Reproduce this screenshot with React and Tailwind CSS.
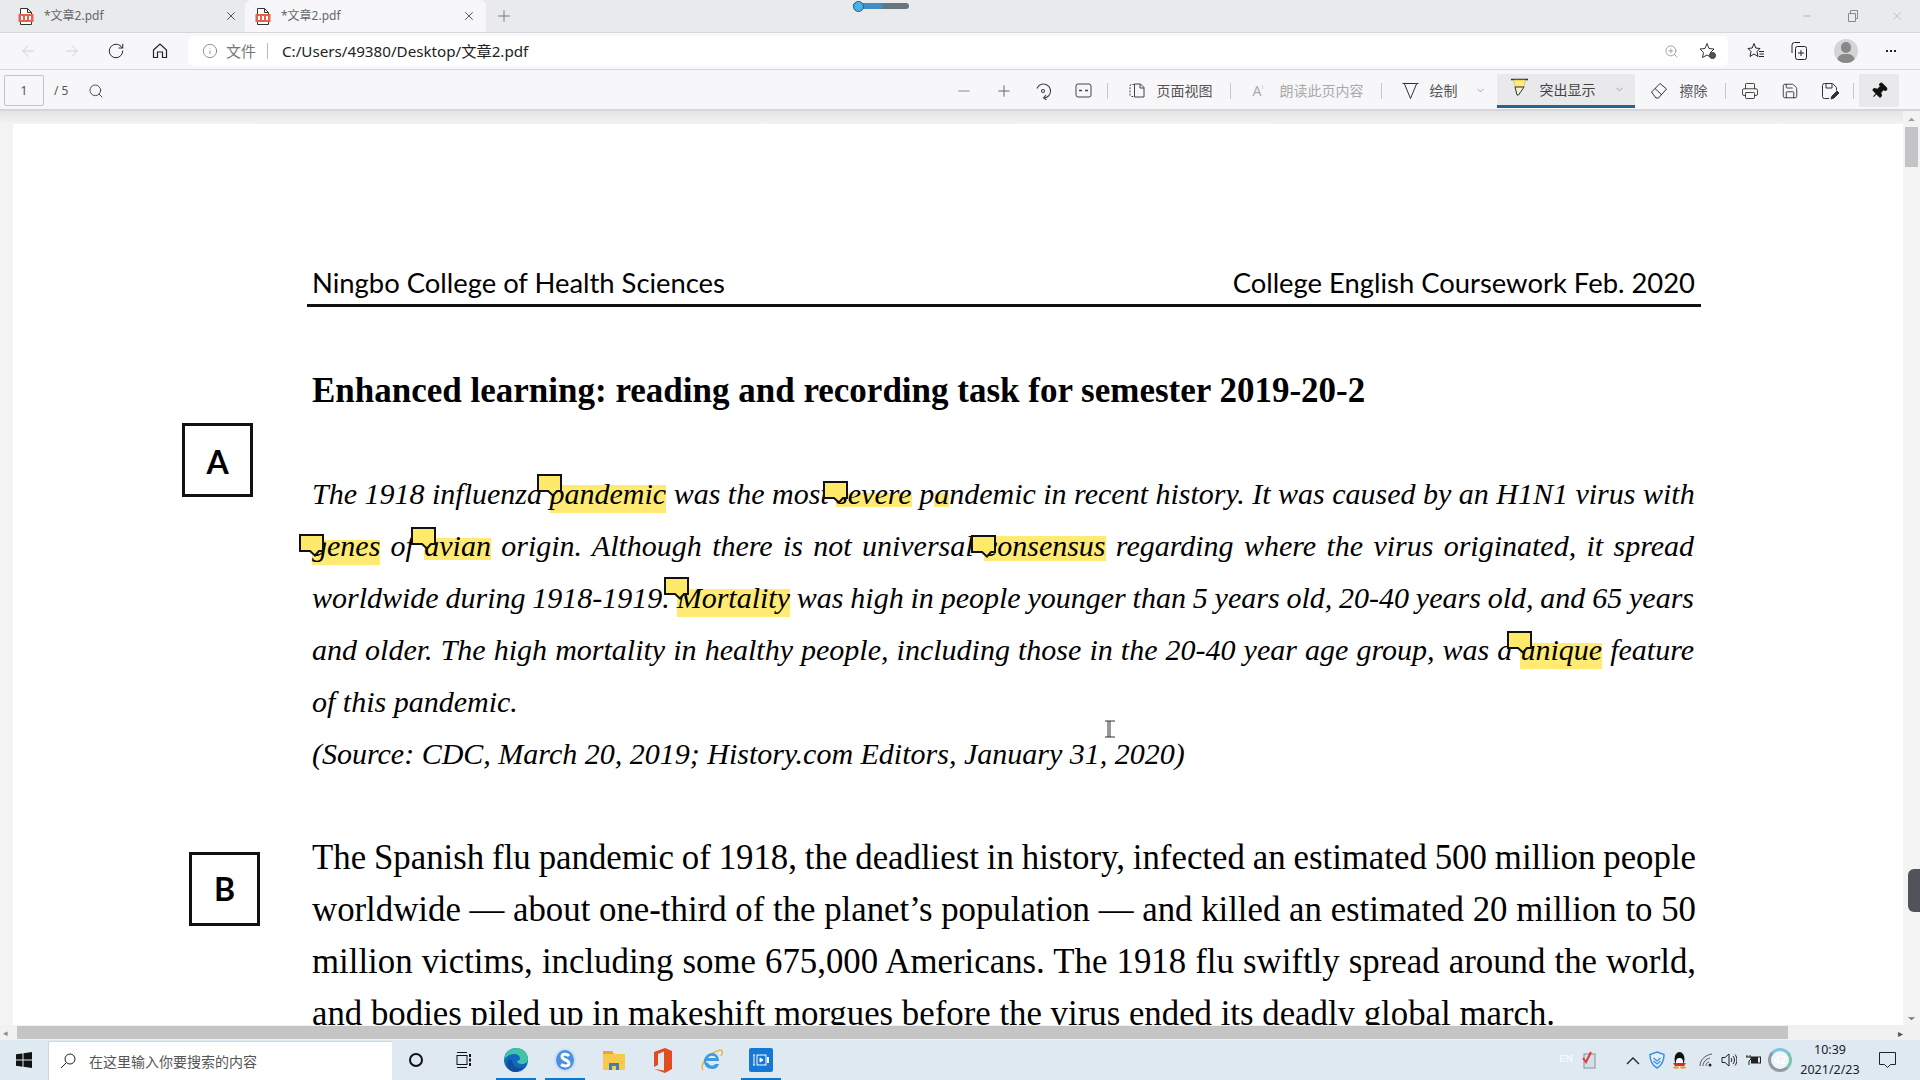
import {
  ArrowLeft,
  ArrowRight,
  RotateCw,
  Info,
  ZoomIn,
  Minus,
  Plus,
  Search,
  X,
  ChevronDown,
  ChevronUp,
  Printer,
  Save,
  Pin,
} from "lucide-react";

const uiFont = "font-['Noto_Sans','Noto_Sans_CJK_SC',sans-serif]";
const serif = "font-['Liberation_Serif','Noto_Sans_CJK_SC',serif]";

function PdfIcon() {
  return (
    <svg width="16" height="17" viewBox="0 0 16 17" className="shrink-0">
      <path d="M2.5 .5h7l4 4v12h-11z" fill="#fff" stroke="#333" />
      <path d="M9.5 .5v4h4" fill="none" stroke="#333" />
      <rect x="0.5" y="6" width="15" height="8" fill="#e8604c" />
      <rect x="3" y="8" width="2" height="4" fill="#fff" />
      <rect x="7" y="8" width="2" height="4" fill="#fff" />
      <rect x="11" y="8" width="2" height="4" fill="#fff" />
    </svg>
  );
}

function Tab({ active }) {
  return (
    <div
      className={`flex items-center h-[32px] w-[241px] ${
        active ? "bg-[#f7f7f9] rounded-t-md pl-[10px] pr-[10px]" : "pl-[18px] pr-[3px] mr-[4px]"
      }`}
    >
      <PdfIcon />
      <span className="ml-[10px] text-[12px] text-[#666]">*文章2.pdf</span>
      <X className="ml-auto w-[14px] h-[14px] text-[#333]" strokeWidth={1.4} />
    </div>
  );
}

function TabBar() {
  return (
    <div className="h-[32px] bg-[#e9eaec] flex items-center relative shrink-0">
      <Tab />
      <Tab active />
      <Plus className="ml-[9px] w-[18px] h-[18px] text-[#777]" strokeWidth={1.3} />
      {/* slider thing from the screen recorder */}
      <div className="absolute left-[853px] top-[3px] w-[56px] h-[6px] rounded-full bg-[#68747e]">
        <div className="w-[30px] h-full rounded-full bg-[#3f8fc4]" />
        <div className="absolute left-0 top-[-2px] w-[11px] h-[11px] rounded-full bg-[#45b1f0] border border-[#35566e]" />
      </div>
      <div className="ml-auto flex items-center text-[#999] pr-[16px]">
        <Minus className="w-[12px] h-[12px]" strokeWidth={1.2} />
        <svg width="12" height="14" viewBox="0 0 12 14" fill="none" stroke="#888" className="ml-[34px]">
          <path d="M1.5 4.5h7v8h-7zM3.5 4.5v-3h7v8h-2" />
        </svg>
        <X className="ml-[31px] w-[14px] h-[14px] text-[#aaa]" strokeWidth={1} />
      </div>
    </div>
  );
}

function AddressBar() {
  return (
    <div className="h-[38px] bg-[#f7f7f9] border-t border-[#d8d8da] border-b flex items-center shrink-0">
      <ArrowLeft className="ml-[19px] w-[18px] h-[18px] text-[#cfcfd1]" strokeWidth={1.3} />
      <ArrowRight className="ml-[26px] w-[18px] h-[18px] text-[#cfcfd1]" strokeWidth={1.3} />
      <RotateCw className="ml-[26px] w-[18px] h-[18px] text-[#222]" strokeWidth={1.3} />
      <svg width="18" height="18" viewBox="0 0 18 18" fill="none" stroke="#222" strokeWidth="1.2" className="ml-[26px]">
        <path d="M2.5 8 9 2l6.5 6v7.5h-4V10h-5v5.500h-4z" />
      </svg>
      <div className="ml-[19px] w-[1540px] h-[30px] bg-white rounded-md flex items-center">
        <Info className="ml-[14px] w-[16px] h-[16px] text-[#777]" strokeWidth={1.2} />
        <span className="ml-[8px] text-[15px] text-[#777]">文件</span>
        <span className="ml-[11px] w-px h-[16px] bg-[#bbb]" />
        <span className="ml-[14px] text-[15.2px] text-[#222]">C:/Users/49380/Desktop/文章2.pdf</span>
        <ZoomIn className="ml-auto w-[15px] h-[15px] text-[#888]" strokeWidth={1.2} />
        <svg width="18" height="18" viewBox="0 0 18 18" fill="none" stroke="#333" className="ml-[20px] mr-[11px]">
          <path d="M8 1.500l2 5 5 .5-3.500 3.500 1 5L8 13l-4.500 2.500 1-5L1 7l5-.5z" />
          <circle cx="13.500" cy="13.500" r="3" fill="#555" />
        </svg>
      </div>
      <svg width="18" height="18" viewBox="0 0 18 18" fill="none" stroke="#222" className="ml-[19px]">
        <path d="M7 1.500 8.800 6 13 6.500 10 9.500l1 5-4-2.500L3 14.500l1-5-3-3 4.200-.5z" />
        <path d="M12 9.500h5M12.500 12h4.500M12 14.500h5" />
      </svg>
      <svg width="18" height="20" viewBox="0 0 18 20" fill="none" stroke="#222" className="ml-[25px]">
        <path d="M2 12V4a2.500 2.500 0 0 1 2.500-2.500H10" />
        <rect x="5.500" y="5.500" width="11" height="13" rx="2" />
        <path d="M11 9v6M8 12h6" />
      </svg>
      <div className="ml-[26px] w-[24px] h-[24px] rounded-full bg-[#d4d4d6] overflow-hidden relative">
        <div className="absolute left-[7px] top-[3px] w-[10px] h-[11px] rounded-full bg-[#888]" />
        <div className="absolute left-[3px] top-[15px] w-[18px] h-[14px] rounded-full bg-[#888]" />
      </div>
      <span className="ml-[28px] flex gap-[2px]">
        <i className="w-[2px] h-[2px] bg-[#222]" />
        <i className="w-[2px] h-[2px] bg-[#222]" />
        <i className="w-[2px] h-[2px] bg-[#222]" />
      </span>
    </div>
  );
}

function Sep({ className }) {
  return <span className={`w-px h-[16px] bg-[#c8c8ca] ${className}`} />;
}

function PdfToolbar() {
  return (
    <div className="h-[41px] bg-[#f7f7f9] border-b-2 border-[#d6d6d8] flex items-start shrink-0 text-[#555] text-[14px]">
      <div className="ml-[4px] mt-[5px] w-[40px] h-[31px] border border-[#c4c4c6] rounded-[2px] flex items-center justify-center text-[12px] text-[#555]">
        1
      </div>
      <span className="ml-[10px] mt-[12px] text-[12px] leading-[18px]">/ 5</span>
      <Search className="ml-[20px] mt-[13px] w-[16px] h-[16px] text-[#333]" strokeWidth={1.3} />
      <div className="ml-[851px] h-[41px] flex items-center">
        <Minus className="w-[18px] h-[18px] text-[#888]" strokeWidth={1.3} />
        <Plus className="ml-[22px] w-[18px] h-[18px] text-[#666]" strokeWidth={1.3} />
        <svg width="18" height="18" viewBox="0 0 18 18" fill="none" stroke="#444" strokeWidth="1.1" className="ml-[21px]">
          <path d="M3 6.500A7 7 0 1 1 10 16" />
          <path d="m12 13-2.500 3 3 2" />
          <circle cx="9" cy="9" r="1.500" />
        </svg>
        <svg width="17" height="15" viewBox="0 0 17 15" fill="none" stroke="#444" className="ml-[23px]">
          <rect x="1" y="1" width="15" height="13" rx="2" />
          <path d="M4 7.500h3M10 7.500h3" strokeWidth="1.600" />
        </svg>
        <Sep className="ml-[15px]" />
        <svg width="16" height="15" viewBox="0 0 16 15" fill="none" stroke="#444" className="ml-[21px]">
          <path d="M5.500 1.500h-3a1.500 1.500 0 0 0-1.500 1.500v9a1.500 1.500 0 0 0 1.500 1.500h3" strokeDasharray="2 1.200" />
          <path d="M5.500 1h6l3.500 3.500V14H5.500zM11 1v4h4" />
        </svg>
        <span className="ml-[11px] leading-none">页面视图</span>
        <Sep className="ml-[18px]" />
        <span className="ml-[21px] w-[14px] text-[#aaa] text-[14px] leading-none whitespace-nowrap">A<sup className="text-[8px]">⁾</sup></span>
        <span className="ml-[13px] text-[#aaa] leading-none">朗读此页内容</span>
        <Sep className="ml-[18px]" />
        <svg width="17" height="18" viewBox="0 0 17 18" fill="none" stroke="#333" className="ml-[20px]">
          <path d="M.5 1.500h16M2.500 2 8.500 16.500 14.500 2" />
        </svg>
        <span className="ml-[10px] leading-none">绘制</span>
        <ChevronDown className="ml-[18px] w-[11px] h-[11px] text-[#666]" strokeWidth={1.2} />
        <div className="ml-[11px] w-[138px] h-[34px] mt-[1px] bg-[#e9e9eb] border-b-[3px] border-[#28648f] flex items-center">
          <svg width="18" height="20" viewBox="0 0 18 20" className="ml-[14px] mb-[3px]">
            <path d="M0 1.500h17" stroke="#333" strokeWidth="1.500" />
            <path d="M2.500 2h12l-1.500 7H4z" fill="#ffec7a" stroke="#bda94c" strokeWidth=".6" />
            <path d="M4 9h9l-2 3-3.500 5L6 17z" fill="#f3f0d8" stroke="#333" />
          </svg>
          <span className="ml-[10px] leading-none text-[#444]">突出显示</span>
          <ChevronDown className="ml-[19px] w-[11px] h-[11px] text-[#666]" strokeWidth={1.2} />
        </div>
        <svg width="18" height="18" viewBox="0 0 18 18" fill="none" stroke="#333" className="ml-[15px]">
          <path d="M1.500 10 10 1.500 16.500 7 8.500 16H6z" />
          <path d="M5 6.500 12 13" />
        </svg>
        <span className="ml-[11px] leading-none">擦除</span>
        <Sep className="ml-[18px]" />
        <Printer className="ml-[15px] w-[18px] h-[18px] text-[#333]" strokeWidth={1.2} />
        <Save className="ml-[22px] w-[18px] h-[18px] text-[#333]" strokeWidth={1.2} />
        <svg width="18" height="18" viewBox="0 0 18 18" fill="none" stroke="#333" className="ml-[22px]">
          <path d="M8 16.500H3.500a2 2 0 0 1-2-2v-11a2 2 0 0 1 2-2h8l4 4v3" />
          <path d="M5 2v4h6V2" />
          <path d="M10 17l1-3 5-5 2 2-5 5z" fill="#333" />
        </svg>
        <Sep className="ml-[14px]" />
        <div className="ml-[5px] w-[40px] h-[33px] bg-[#e9e9eb] rounded-[2px] flex items-center justify-center">
          <Pin className="w-[18px] h-[18px] rotate-45 text-[#111] fill-[#111]" strokeWidth={1.4} />
        </div>
      </div>
    </div>
  );
}

function Note({ className }) {
  return (
    <svg width="25" height="23" viewBox="0 0 25 23" className={`absolute z-10 ${className}`}>
      <path
        d="M1 1h23v16h-4l-4 4.500-5-4.500H1z"
        fill="#ffe96b"
        stroke="#111"
        strokeWidth="2"
      />
    </svg>
  );
}

// word with a yellow bar behind it, bar = top/height classes, note = optional comment marker
function Hl({ children, bar, note }) {
  return (
    <span className="relative inline-block leading-[34px]">
      <span className={`absolute -z-10 left-0 right-0 bg-[#ffeb74] ${bar}`} />
      {note && <Note className={`left-[-13px] ${note}`} />}
      {children}
    </span>
  );
}

function Line({ children, last, className = "" }) {
  return (
    <div className={`h-[52px] leading-[52px] whitespace-nowrap ${last ? "" : "[text-align:justify] [text-align-last:justify]"} ${className}`}>
      {children}
    </div>
  );
}

function LabelBox({ children, className }) {
  return (
    <div
      className={`w-[71px] h-[74px] shrink-0 border-[3px] border-[#111] flex items-center justify-center text-[32px] font-bold text-black font-['Lato',sans-serif] ${className}`}
    >
      {children}
    </div>
  );
}

function PdfPage() {
  return (
    <div className="w-[1890px] bg-white isolate text-black relative pl-[169px] h-[1000px]">
      <div className="ml-[125px] w-[1394px] pt-[139px] border-b-[3px] border-[#111] h-[183px] flex justify-between pl-[5px] pr-[6px] font-['Lato',sans-serif] text-[27.4px] leading-[40px]">
        <span>Ningbo College of Health Sciences</span>
        <span>College English Coursework Feb. 2020</span>
      </div>
      <h1 className={`ml-[130px] mt-[62px] h-[44px] leading-[44px] font-bold text-[35px] ${serif}`}>
        Enhanced learning: reading and recording task for semester 2019-20-2
      </h1>

      <section className="flex mt-[10px]">
        <LabelBox className="pt-[3px]">A</LabelBox>
        <div className={`ml-[59px] w-[1382px] pt-[45px] italic text-[30px] ${serif}`}>
          <Line>
            The 1918 influenza <Hl bar="top-[8px] h-[28px]" note="top-[-3px]">pandemic</Hl> was the most{" "}
            <Hl bar="top-[16px] h-[14px]" note="top-[4px]">severe</Hl> p
            <Hl bar="top-[16px] h-[14px]">a</Hl>ndemic in recent history. It was caused by an H1N1 virus with
          </Line>
          <Line>
            <Hl bar="top-[11px] h-[25px]" note="top-[5px]">genes</Hl> of{" "}
            <Hl bar="top-[9px] h-[22px]" note="top-[-2px]">avian</Hl> origin. Although there is not universal{" "}
            <Hl bar="top-[7px] h-[25px]" note="top-[6px]">consensus</Hl> regarding where the virus originated, it spread
          </Line>
          <Line className="[word-spacing:-1.2px]">
            worldwide during 1918-1919. <Hl bar="top-[8px] h-[28px]" note="top-[-4px]">Mortality</Hl> was high in people
            younger than 5 years old, 20-40 years old, and 65 years
          </Line>
          <Line>
            and older. The high mortality in healthy people, including those in the 20-40 year age group, was a{" "}
            <Hl bar="top-[10px] h-[26px]" note="top-[-2px]">unique</Hl> feature
          </Line>
          <Line last>of this pandemic.</Line>
          <Line last>(Source: CDC, March 20, 2019; History.com Editors, January 31, 2020)</Line>
        </div>
      </section>

      <section className="flex mt-[52px]">
        <LabelBox className="ml-[7px] mt-[20px]">B</LabelBox>
        <div className={`ml-[52px] w-[1384px] text-[34.8px] ${serif}`}>
          <Line className="[word-spacing:-1px]">The Spanish flu pandemic of 1918, the deadliest in history, infected an estimated 500 million people</Line>
          <Line>worldwide — about one-third of the planet’s population — and killed an estimated 20 million to 50</Line>
          <Line>million victims, including some 675,000 Americans. The 1918 flu swiftly spread around the world,</Line>
          <Line last>and bodies piled up in makeshift morgues before the virus ended its deadly global march.</Line>
        </div>
      </section>

      {/* text cursor */}
      <svg width="14" height="18" viewBox="0 0 14 18" fill="none" stroke="#333" className="absolute left-[1090px] top-[596px]">
        <path d="M2 1h10M2 17h10M7 1v16M5 1v16" />
      </svg>
    </div>
  );
}

function Viewer() {
  return (
    <div className="flex-1 min-h-0 flex">
      <div className="flex-1 min-w-0 overflow-hidden bg-[#f3f3f3] pl-[13px] pt-[13px] bg-[linear-gradient(#e4e4e6,#f3f3f3_13px)]">
        <PdfPage />
      </div>
      <div className="w-[17px] bg-[#f3f3f3] relative flex flex-col items-center">
        <ChevronUp className="w-[11px] h-[11px] text-[#999] mt-[3px] fill-[#999]" />
        <div className="mt-[2px] w-[13px] h-[40px] bg-[#c4c4c6]" />
        <ChevronDown className="w-[11px] h-[11px] text-[#777] mt-auto mb-[1px] fill-[#777]" />
        <div className="absolute left-[5px] top-[758px] w-[12px] h-[43px] bg-[#50545a] rounded-l-md" />
      </div>
    </div>
  );
}

function HScrollbar() {
  return (
    <div className="h-[15px] bg-[#f1f1f1] flex items-center shrink-0 pr-[17px]">
      <span className="w-[11px] text-[9px] leading-none text-[#888] pl-[3px]">◂</span>
      <div className="ml-[6px] w-[1771px] h-[13px] bg-[#c5c5c5]" />
      <span className="ml-auto text-[10px] leading-none text-[#555]">▸</span>
    </div>
  );
}

function TrayIcons() {
  return (
    <div className="flex items-center">
      <span className="text-[9px] text-white font-['DejaVu_Serif',serif] w-[20px] ml-[4px]">EN</span>
      <svg width="14" height="18" viewBox="0 0 14 18" className="ml-[3px]">
        <rect x="2" y="3" width="11" height="14" fill="#d5dfe8" stroke="#8a9098" />
        <path d="M1 7l3 4 5-10" fill="none" stroke="#dd3b2e" strokeWidth="2" />
      </svg>
      <svg width="14" height="9" viewBox="0 0 14 9" fill="none" stroke="#222" strokeWidth="1.300" className="ml-[30px]">
        <path d="M1 8l6-6 6 6" />
      </svg>
      <svg width="16" height="18" viewBox="0 0 16 18" className="ml-[9px]">
        <path d="M8 1l7 2.500c0 7-2.500 11-7 13.500C3.500 14.500 1 10.500 1 3.500z" fill="#e4f0fb" stroke="#3f8fe0" strokeWidth="1.500" />
        <path d="M4.500 7l3.500 3 3.500-3M4.500 10l3.500 3 3.500-3" fill="none" stroke="#3f8fe0" strokeWidth="1.300" />
      </svg>
      <svg width="15" height="18" viewBox="0 0 15 18" className="ml-[7px]">
        <ellipse cx="7.500" cy="8" rx="5" ry="7" fill="#111" />
        <ellipse cx="7.500" cy="11" rx="3.500" ry="4" fill="#fff" />
        <path d="M1 12h13l-2 3H3z" fill="#d9282f" />
        <ellipse cx="4" cy="16.500" rx="3" ry="1.200" fill="#e9a31e" />
        <ellipse cx="11" cy="16.500" rx="3" ry="1.200" fill="#e9a31e" />
      </svg>
      <svg width="14" height="14" viewBox="0 0 14 14" fill="none" stroke="#555" className="ml-[12px]">
        <path d="M1 13C1 7 6 2 13 1M4 13c0-4 3-7 7-8M7 13c0-2 1-4 3-4" />
        <circle cx="11" cy="12" r="1.500" fill="#222" stroke="none" />
      </svg>
      <svg width="16" height="14" viewBox="0 0 16 14" fill="none" stroke="#222" className="ml-[8px]">
        <path d="M1 4.500h3L8 1v12L4 9.500H1z" />
        <path d="M10 5c1 1 1 3 0 4M12 3c2 2 2 6 0 8M14 1.500c2.500 3 2.500 8 0 11" />
      </svg>
      <svg width="16" height="12" viewBox="0 0 16 12" className="ml-[9px]">
        <path d="M1 1v2M4 1v2M0 3h5v2l-2 2v4" fill="none" stroke="#222" />
        <rect x="5" y="2.500" width="10" height="7" fill="#222" />
        <rect x="12" y="3.500" width="2" height="5" fill="#dfe9f2" />
      </svg>
      <div className="ml-[6px] w-[24px] h-[24px] rounded-full border-[3px] border-[#8f9aa1] border-r-[#74c7a8] border-t-[#7cc4e0] bg-white/50 flex items-center justify-center text-[11px] text-white">
        42
      </div>
    </div>
  );
}

function Taskbar() {
  return (
    <div className={`h-[40px] bg-[#dfe9f2] flex items-center shrink-0 ${uiFont}`}>
      <svg width="16" height="16" viewBox="0 0 16 16" className="ml-[16px]" fill="#111">
        <path d="M0 2.300 6.500 1.400v6.200H0zM7.500 1.300 16 0v7.600H7.500zM0 8.500h6.500v6.200L0 13.700zM7.500 8.500H16V16l-8.500-1.200z" />
      </svg>
      <div className="ml-[16px] w-[344px] h-[39px] mt-[1px] bg-white border-l border-t border-[#cfd6dc] flex items-center">
        <svg width="16" height="16" viewBox="0 0 16 16" fill="none" stroke="#222" className="ml-[11px]">
          <circle cx="10" cy="6" r="5" />
          <path d="M6.300 9.700 1 15" />
        </svg>
        <span className="ml-[13px] text-[14px] text-[#555]">在这里输入你要搜索的内容</span>
      </div>
      <div className="ml-[17px] w-[14px] h-[14px] rounded-full border-[2px] border-[#111]" />
      <svg width="16" height="16" viewBox="0 0 16 16" fill="none" stroke="#111" className="ml-[33px]">
        <path d="M1 .5h10M1 15.500h10" />
        <rect x="1" y="3.500" width="10" height="9" />
        <path d="M14 2v3M14 6.500v3M14 11v3" strokeWidth="2" />
      </svg>
      <TaskApp bar className="ml-[24px]">
        <svg width="24" height="24" viewBox="0 0 24 24">
          <circle cx="12" cy="12" r="12" fill="#1268bd" />
          <path d="M0 12C1 3 8 0 13 0c6 0 11 5 11 11 0 3-3 5-6 5-3 0-5-1-5-3 2 0 3-1 3-3 0-2-3-4-6-4-5 0-8 3-10 6z" fill="#3fc5a6" />
          <path d="M8 12c0 4 3 8 8 8 1 0 3-1 5-2-3 4-7 6-10 6-4 0-8-3-8-9 0-2 2-4 5-3z" fill="#0e4f9e" />
        </svg>
      </TaskApp>
      <TaskApp bar>
        <svg width="22" height="24" viewBox="0 0 22 24">
          <ellipse cx="11" cy="12" rx="11" ry="12" fill="#cfe0f5" />
          <ellipse cx="11" cy="12" rx="9" ry="10" fill="#4a90e2" />
          <path d="M15 8c-2-2.500-7-2.500-7 .5 0 4 7 3 7 7 0 3-5 3-8 1" fill="none" stroke="#fff" strokeWidth="3" />
        </svg>
      </TaskApp>
      <TaskApp>
        <svg width="22" height="20" viewBox="0 0 22 20">
          <path d="M0 1h9l2 3h11v16H0z" fill="#f7c94c" />
          <path d="M0 1h9l2 3H0z" fill="#e5a82e" />
          <path d="M6 13h10v7h-3v-4H9v4H6z" fill="#3f7fb0" />
        </svg>
      </TaskApp>
      <TaskApp>
        <svg width="20" height="26" viewBox="0 0 20 26">
          <path d="M1 5 12 1l7 3v18l-7 4-11-4 10 1.500V4.500L5 7v11l-4 2z" fill="#e04c1f" />
        </svg>
      </TaskApp>
      <TaskApp>
        <svg width="24" height="24" viewBox="0 0 24 24" fill="none">
          <path d="M3 22C0 18 6 6 20 2c3 0 3 3 1 6" stroke="#e5b64a" strokeWidth="1.500" />
          <path d="M6 13h13c0-5-3-8-7-8s-8 4-8 8c0 5 4 8 8 8 3 0 6-1 7-5h-4c-1 2-5 2-6 0 0-1-3-1-3-3zM8 10c1-3 7-3 8 0z" fill="#3d9be0" fillRule="evenodd" />
        </svg>
      </TaskApp>
      <TaskApp bar>
        <div className="w-[24px] h-[24px] rounded-[2px] bg-[#1478d4] flex items-center justify-center">
          <svg width="18" height="12" viewBox="0 0 18 12" fill="none" stroke="#fff">
            <path d="M1 1h2M1 11h2M2 1v10" />
            <rect x="5" y="1" width="9" height="10" />
            <path d="M8 4l3 2-3 2z" fill="#fff" />
            <path d="M16 3v6" strokeWidth="2" />
          </svg>
        </div>
      </TaskApp>
      <div className="ml-auto flex items-center">
        <TrayIcons />
        <div className="ml-[8px] text-[12.5px] leading-[20px] text-center text-[#222] w-[60px]">
          <div>10:39</div>
          <div>2021/2/23</div>
        </div>
        <svg width="17" height="16" viewBox="0 0 17 16" fill="none" stroke="#222" className="ml-[19px] mr-[24px]">
          <path d="M.5.500h16v12h-5l-3 3-3-3h-5z" />
        </svg>
      </div>
    </div>
  );
}

function TaskApp({ children, bar, className = "ml-[9px]" }) {
  return (
    <div className={`relative w-[40px] h-[40px] flex items-center justify-center ${className}`}>
      {children}
      {bar && <span className="absolute left-0 right-0 bottom-0 h-[2px] bg-[#0b79d0]" />}
    </div>
  );
}

export default function App() {
  return (
    <div className={`w-[1920px] h-[1080px] overflow-hidden flex flex-col ${uiFont}`}>
      <TabBar />
      <AddressBar />
      <PdfToolbar />
      <Viewer />
      <HScrollbar />
      <Taskbar />
    </div>
  );
}
